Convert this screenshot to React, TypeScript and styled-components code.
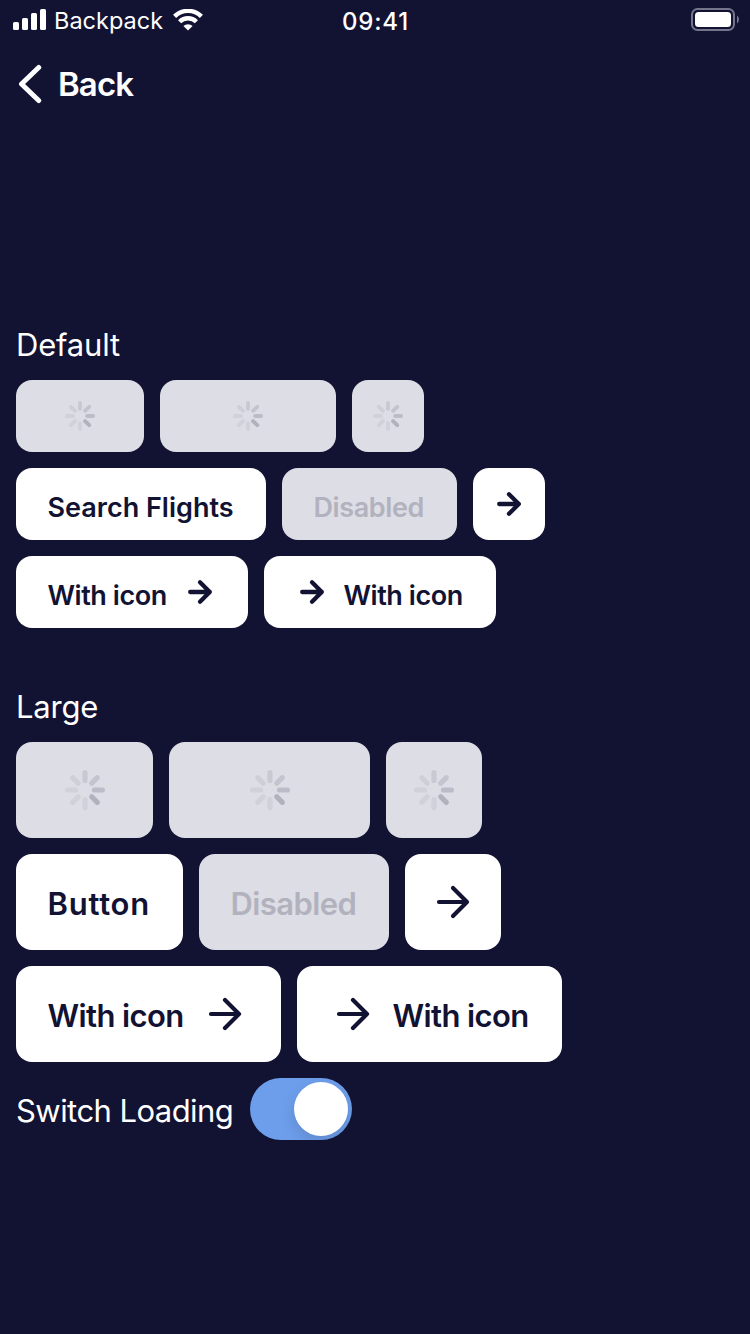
import React from "react";
import styled, { createGlobalStyle } from "styled-components";

const NAVY = "#121233";

const GlobalStyle = createGlobalStyle`
  * { box-sizing: border-box; }
  body {
    margin: 0;
    background: ${NAVY};
    font-family: Inter, "Liberation Sans", sans-serif;
  }
`;

const Screen = styled.main`
  width: 750px;
  height: 1334px;
  overflow: hidden;
  background: ${NAVY};
  color: #fff;
`;

const StatusBar = styled.header`
  display: grid;
  grid-template-columns: 1fr auto 1fr;
  grid-template-rows: 40px;
  height: 40px;
  padding: 0 11px 0 13px;
  align-items: center;
`;

const Carrier = styled.div`
  display: flex;
  align-items: center;
  height: 40px;
  font-size: 23.5px;
  svg { display: block; }
`;

const CarrierName = styled.span`
  width: 126px;
  padding: 2px 0 0 7px;
  line-height: 40px;
`;

const Clock = styled.time`
  padding: 4px 1px 0 0;
  font-size: 24px;
  font-weight: 500;
  line-height: 40px;
  letter-spacing: 0.8px;
`;

const BatterySlot = styled.div`
  display: flex;
  justify-content: flex-end;
  svg { display: block; }
`;

const NavBar = styled.nav`
  display: flex;
  align-items: center;
  height: 88px;
  padding-left: 16px;
`;

const BackLabel = styled.span`
  padding-left: 14px;
  font-size: 33px;
  font-weight: 600;
  line-height: 40px;
  letter-spacing: -0.9px;
`;

const Content = styled.div`
  padding: 196px 16px 0;
`;

const Section = styled.section<{ $after: number }>`
  display: flex;
  flex-direction: column;
  gap: 16px;
  margin-bottom: ${(p) => p.$after}px;
`;

const Heading = styled.h2`
  margin: 0;
  height: 40px;
  font-size: 31px;
  font-weight: 400;
  line-height: 42px;
  letter-spacing: -0.2px;
`;

const Row = styled.div`
  display: flex;
  gap: 16px;
`;

const Label = styled.span<{ $spacing: number }>`
  padding-top: 4px;
  margin-left: -0.5px;
  white-space: nowrap;
  letter-spacing: ${(p) => p.$spacing}px;
`;

const Button = styled.button<{ $large?: boolean; $width: number; $align?: "center" | "flex-start" }>`
  display: flex;
  align-items: center;
  justify-content: ${(p) => p.$align ?? "space-between"};
  gap: 16px;
  width: ${(p) => p.$width}px;
  height: ${(p) => (p.$large ? 96 : 72)}px;
  padding: 0 ${(p) => (p.$align === "center" ? 0 : 32)}px;
  border: 0;
  border-radius: 16px;
  background: #fff;
  color: ${NAVY};
  font-family: inherit;
  font-size: ${(p) => (p.$large ? 31 : 27)}px;
  font-weight: 600;
  line-height: ${(p) => (p.$large ? 38 : 34)}px;
  svg { display: block; flex: none; }
  ${Label} { padding-top: ${(p) => (p.$large ? 4 : 7)}px; }
  &:disabled {
    background: #dddde5;
    color: #b2b2bf;
  }
`;

const SwitchRow = styled.label`
  display: flex;
  gap: 16px;
  height: 62px;
`;

const SwitchText = styled.span`
  width: 218px;
  font-size: 31px;
  line-height: 66px;
  white-space: nowrap;
  letter-spacing: -0.55px;
`;

const Track = styled.span`
  display: flex;
  justify-content: flex-end;
  width: 102px;
  height: 62px;
  padding: 4px;
  border-radius: 31px;
  overflow: hidden;
  background: #6d9eeb;
`;

const Knob = styled.span`
  width: 54px;
  height: 54px;
  border-radius: 50%;
  background: #fff;
  box-shadow: 0 6px 14px rgba(0, 0, 0, 0.13);
`;

const Signal = () => (
  <svg width="34" height="22" viewBox="0 0 34 22" fill="#fff">
    <rect x="0" y="13" width="6" height="8" rx="1.5" />
    <rect x="9" y="9" width="6" height="12" rx="1.5" />
    <rect x="18" y="4" width="6" height="17" rx="1.5" />
    <rect x="27" y="0" width="6" height="21" rx="1.5" />
  </svg>
);

const Wifi = () => (
  <svg width="30" height="22" viewBox="0 0 30 22" fill="none" stroke="#fff" strokeWidth="4.4">
    <path d="M1.6 7.4a19 19 0 0 1 26.8 0" />
    <path d="M6.6 12.7a12 12 0 0 1 16.8 0" />
    <path d="M15 21.6 10.4 17a6.6 6.6 0 0 1 9.2 0z" fill="#fff" stroke="none" />
  </svg>
);

const Battery = () => (
  <svg width="48" height="24" viewBox="0 0 48 24">
    <rect x="1" y="1" width="42" height="21" rx="5.5" fill="none" stroke="#74748a" strokeWidth="2" />
    <rect x="4" y="4" width="36" height="15" rx="3.5" fill="#fff" />
    <path d="M46 7.5c2.6 1.5 2.6 6.5 0 8z" fill="#74748a" />
  </svg>
);

const Chevron = () => (
  <svg width="28" height="40" viewBox="0 0 28 40" fill="none" stroke="#fff" strokeWidth="5" strokeLinecap="round" strokeLinejoin="round">
    <path d="M22.7 3.5 5.5 20 22.7 36.5" />
  </svg>
);

const Arrow = ({ large }: { large?: boolean }) =>
  large ? (
    <svg width="48" height="48" viewBox="0 0 48 48" fill="none" stroke={NAVY} strokeWidth="4.2" strokeLinecap="round" strokeLinejoin="round">
      <path d="M10 24h28M24 10l14 14-14 14" />
    </svg>
  ) : (
    <svg width="32" height="32" viewBox="0 0 32 32" fill="none" stroke={NAVY} strokeWidth="4.3" strokeLinecap="round" strokeLinejoin="round">
      <path d="M6.2 16h19.6M16 6.2l9.8 9.8-9.8 9.8" />
    </svg>
  );

const SPOKES = ["#c9c9d2", "#c4c4ce", "#bcbcc8", "#b2b2bf", "#d1d1da", "#d1d1da", "#d1d1da", "#cfcfd8"];

const Spinner = ({ size }: { size: number }) => (
  <svg width={size} height={size} viewBox="0 0 40 40" strokeWidth="5.2" strokeLinecap="round">
    {SPOKES.map((color, i) => (
      <path key={i} d="M20 2.6v7.9" stroke={color} transform={`rotate(${i * 45} 20 20)`} />
    ))}
  </svg>
);

const Loading = ({ width, large }: { width: number; large?: boolean }) => (
  <Button $width={width} $large={large} $align="center" disabled aria-label="Loading">
    <Spinner size={large ? 40 : 30} />
  </Button>
);

export default function App() {
  return (
    <Screen>
      <GlobalStyle />
      <StatusBar>
        <Carrier>
          <Signal />
          <CarrierName>Backpack</CarrierName>
          <Wifi />
        </Carrier>
        <Clock>09:41</Clock>
        <BatterySlot><Battery /></BatterySlot>
      </StatusBar>
      <NavBar>
        <Chevron />
        <BackLabel>Back</BackLabel>
      </NavBar>
      <Content>
        <Section $after={58}>
          <Heading>Default</Heading>
          <Row>
            <Loading width={128} />
            <Loading width={176} />
            <Loading width={72} />
          </Row>
          <Row>
            <Button $width={250}><Label $spacing={0}>Search Flights</Label></Button>
            <Button $width={175} disabled><Label $spacing={-0.4}>Disabled</Label></Button>
            <Button $width={72} $align="center" aria-label="Next"><Arrow /></Button>
          </Row>
          <Row>
            <Button $width={232}><Label $spacing={-0.45}>With icon</Label><Arrow /></Button>
            <Button $width={232} $align="flex-start"><Arrow /><Label $spacing={-0.45}>With icon</Label></Button>
          </Row>
        </Section>
        <Section $after={16}>
          <Heading>Large</Heading>
          <Row>
            <Loading large width={137} />
            <Loading large width={201} />
            <Loading large width={96} />
          </Row>
          <Row>
            <Button $large $width={167}><Label $spacing={0.75}>Button</Label></Button>
            <Button $large $width={190} disabled><Label $spacing={-0.6}>Disabled</Label></Button>
            <Button $large $width={96} $align="center" aria-label="Next"><Arrow large /></Button>
          </Row>
          <Row>
            <Button $large $width={265}><Label $spacing={-0.6}>With icon</Label><Arrow large /></Button>
            <Button $large $width={265} $align="flex-start"><Arrow large /><Label $spacing={-0.6}>With icon</Label></Button>
          </Row>
        </Section>
        <SwitchRow>
          <SwitchText>Switch Loading</SwitchText>
          <Track><Knob /></Track>
        </SwitchRow>
      </Content>
    </Screen>
  );
}
